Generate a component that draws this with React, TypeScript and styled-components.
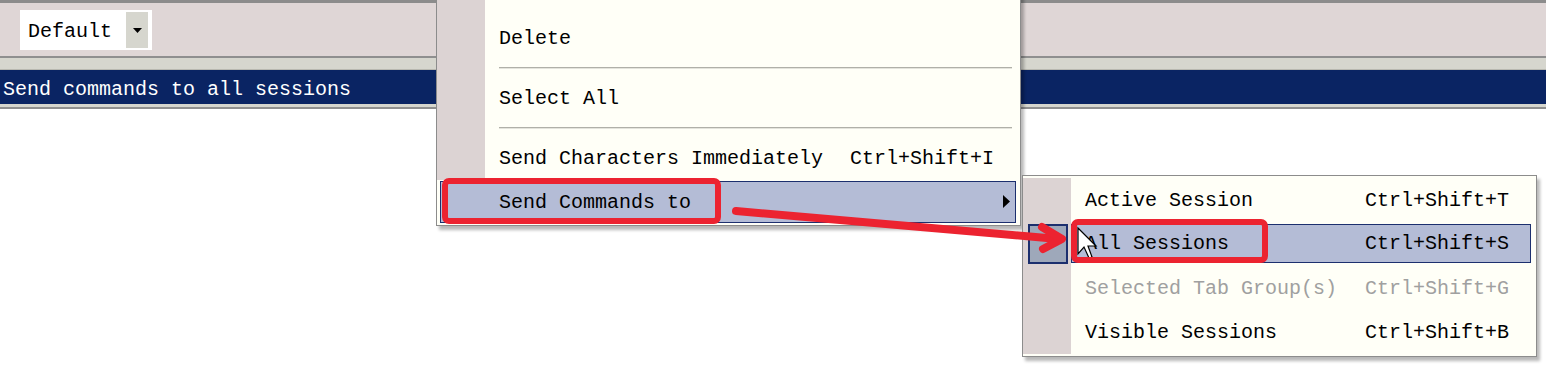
import styled, { createGlobalStyle } from "styled-components";

const GlobalStyle = createGlobalStyle`
  html, body {
    margin: 0;
    padding: 0;
    background: #ffffff;
    overflow: hidden;
  }
  body {
    font-family: "Liberation Mono", "DejaVu Sans Mono", monospace;
  }
`;

type Item =
  | { kind: "sep" }
  | {
      kind: "item";
      label: string;
      shortcut?: string;
      disabled?: boolean;
      active?: boolean;
      checked?: boolean;
      submenu?: boolean;
    };

const editItems: Item[] = [
  { kind: "item", label: "Paste", disabled: true },
  { kind: "item", label: "Delete" },
  { kind: "sep" },
  { kind: "item", label: "Select All" },
  { kind: "sep" },
  { kind: "item", label: "Send Characters Immediately", shortcut: "Ctrl+Shift+I" },
  { kind: "item", label: "Send Commands to", active: true, submenu: true },
];

const sendItems: Item[] = [
  { kind: "item", label: "Active Session", shortcut: "Ctrl+Shift+T" },
  { kind: "item", label: "All Sessions", shortcut: "Ctrl+Shift+S", active: true, checked: true },
  { kind: "item", label: "Selected Tab Group(s)", shortcut: "Ctrl+Shift+G", disabled: true },
  { kind: "item", label: "Visible Sessions", shortcut: "Ctrl+Shift+B" },
];

export default function App() {
  return (
    <>
      <GlobalStyle />
      <Screen>
        <Toolbar>
          <Combo>
            <ComboText>Default</ComboText>
            <ComboButton>
              <svg width="9" height="5" viewBox="0 0 9 5">
                <polygon points="0,0 9,0 4.5,5" fill="#000" />
              </svg>
            </ComboButton>
          </Combo>
        </Toolbar>
        <Band />
        <TitleBar>Send commands to all sessions</TitleBar>
        <Body />

        <EditMenu>
          {editItems.map((it, i) =>
            it.kind === "sep" ? (
              <SepRow key={i}>
                <Gutter />
                <SepLine $left={14} $right={8} />
              </SepRow>
            ) : (
              <Row key={i} $full={!!it.active}>
                <Gutter $hidden={!!it.active} />
                <RowBody $disabled={!!it.disabled} $labelWidth={351}>
                  <span>{it.label}</span>
                  <span>{it.shortcut}</span>
                  {it.submenu && (
                    <SubArrow width="7" height="13" viewBox="0 0 7 13">
                      <polygon points="0,0 7,6.5 0,13" fill="#000" />
                    </SubArrow>
                  )}
                </RowBody>
              </Row>
            )
          )}
        </EditMenu>

        <SendMenu>
          {sendItems.map((it, i) =>
            it.kind === "sep" ? null : (
              <SubRow key={i}>
                <SubGutter>
                  {it.checked && (
                    <CheckBox>
                      <svg width="10" height="9" viewBox="0 0 10 9">
                        <polyline points="1,5 4,8 9,1" fill="none" stroke="#000" strokeWidth="2" />
                      </svg>
                    </CheckBox>
                  )}
                </SubGutter>
                <SubBody $active={!!it.active} $disabled={!!it.disabled}>
                  <span>{it.label}</span>
                  <span>{it.shortcut}</span>
                </SubBody>
              </SubRow>
            )
          )}
        </SendMenu>

        <Annotations width="1546" height="390" viewBox="0 0 1546 390">
          <path
            d="M1078 228 L1078 254 L1084 247 L1089 258 L1092 257 L1088 246 L1096 246 Z"
            fill="#fff"
            stroke="#000"
            strokeWidth="1.2"
          />
          <rect x="445" y="181" width="273" height="40" rx="4" fill="none" stroke="#ec2330" strokeWidth="6" />
          <rect x="1074" y="222" width="191" height="38" rx="4" fill="none" stroke="#ec2330" strokeWidth="6" />
          <line x1="736" y1="211" x2="1058" y2="239" stroke="#ec2330" strokeWidth="8" strokeLinecap="round" />
          <polyline
            points="1042,227 1062,239 1043,249"
            fill="none"
            stroke="#ec2330"
            strokeWidth="8"
            strokeLinecap="round"
            strokeLinejoin="round"
          />
        </Annotations>
      </Screen>
    </>
  );
}

const Screen = styled.div`
  position: relative;
  width: 1546px;
  height: 390px;
  overflow: hidden;
  display: flex;
  flex-direction: column;
  font-family: "Liberation Mono", "DejaVu Sans Mono", monospace;
  font-size: 20px;
  color: #000;
`;

const Toolbar = styled.div`
  border-top: 3px solid #8c8c8c;
  border-bottom: 2px solid #8f8f8f;
  background: #dfd6d6;
  display: flex;
  align-items: flex-start;
  padding: 7px 0 0 20px;
  box-sizing: content-box;
  height: 46px;
`;

const Combo = styled.div`
  width: 132px;
  height: 40px;
  background: #fff;
  display: flex;
  align-items: center;
  justify-content: space-between;
  padding: 2px 4px 2px 8px;
  box-sizing: border-box;
`;

const ComboText = styled.span`
  line-height: 1;
  padding-top: 3px;
`;

const ComboButton = styled.div`
  width: 22px;
  height: 36px;
  background: #d6d6ce;
  display: flex;
  align-items: center;
  justify-content: center;
`;

const Band = styled.div`
  height: 11px;
  background: #d6d6ce;
  border-bottom: 1px solid #b8b8b0;
`;

const TitleBar = styled.div`
  height: 34px;
  box-sizing: border-box;
  background: #0a2463;
  color: #fff;
  display: flex;
  align-items: center;
  padding: 4px 0 0 3px;
  border-bottom: 3px solid #d6d6ce;
  height: 37px;
`;

const Body = styled.div`
  flex: 1;
  background: #fff;
  border-top: 2px solid #8f8f8f;
`;

const MenuBase = styled.div`
  position: absolute;
  background: #fffff7;
  border: 1px solid #8c8c8c;
  box-shadow: 3px 4px 3px rgba(0, 0, 0, 0.28);
  box-sizing: border-box;
  display: flex;
  flex-direction: column;
`;

const EditMenu = styled(MenuBase)`
  left: 436px;
  top: -32px;
  width: 585px;
  padding: 3px 0 2px 0;
`;

const SendMenu = styled(MenuBase)`
  left: 1022px;
  top: 175px;
  width: 515px;
  padding: 2px 0 2px 0;
`;

const Row = styled.div<{ $full: boolean }>`
  display: flex;
  position: relative;
  margin: ${(p) => (p.$full ? "1px 4px 0 3px" : "0")};
  background: ${(p) => (p.$full ? "#b4bcd6" : "transparent")};
  border: ${(p) => (p.$full ? "1px solid #1c2f6e" : "none")};
  height: ${(p) => (p.$full ? "40px" : "44px")};
`;

const Gutter = styled.div<{ $hidden?: boolean }>`
  width: ${(p) => (p.$hidden ? "44px" : "48px")};
  flex: none;
  background: ${(p) => (p.$hidden ? "transparent" : "#dcd3d3")};
`;

const RowBody = styled.div<{ $disabled: boolean; $labelWidth: number }>`
  flex: 1;
  display: flex;
  align-items: center;
  padding-left: 14px;
  color: ${(p) => (p.$disabled ? "#a0a0a0" : "#000")};
  white-space: pre;
  span:first-child {
    width: ${(p) => p.$labelWidth}px;
  }
`;

const SubArrow = styled.svg`
  position: absolute;
  right: 5px;
  top: 13px;
`;

const SepRow = styled.div`
  height: 16px;
  display: flex;
`;

const SepLine = styled.div<{ $left: number; $right: number }>`
  flex: 1;
  margin: 7px ${(p) => p.$right}px 0 ${(p) => p.$left}px;
  height: 1px;
  background: #b0b0a8;
  border-bottom: 1px solid #e4e4dc;
`;

const SubRow = styled.div`
  height: 44px;
  display: flex;
`;

const SubGutter = styled.div`
  width: 48px;
  flex: none;
  background: #dcd3d3;
  display: flex;
  align-items: center;
  justify-content: center;
`;

const CheckBox = styled.div`
  width: 40px;
  height: 40px;
  box-sizing: border-box;
  margin-left: 2px;
  background: #9ea8ba;
  border: 2px solid #1c2f6e;
  display: flex;
  align-items: center;
  justify-content: center;
`;

const SubBody = styled.div<{ $active: boolean; $disabled: boolean }>`
  flex: 1;
  display: flex;
  align-items: center;
  margin: ${(p) => (p.$active ? "2px 5px 3px 0" : "0")};
  padding-left: ${(p) => (p.$active ? "13px" : "14px")};
  background: ${(p) => (p.$active ? "#b4bcd6" : "transparent")};
  border: ${(p) => (p.$active ? "1px solid #1c2f6e" : "none")};
  color: ${(p) => (p.$disabled ? "#a0a0a0" : "#000")};
  white-space: pre;
  span:first-child {
    width: 280px;
  }
`;

const Annotations = styled.svg`
  position: absolute;
  left: 0;
  top: 0;
  pointer-events: none;
`;
